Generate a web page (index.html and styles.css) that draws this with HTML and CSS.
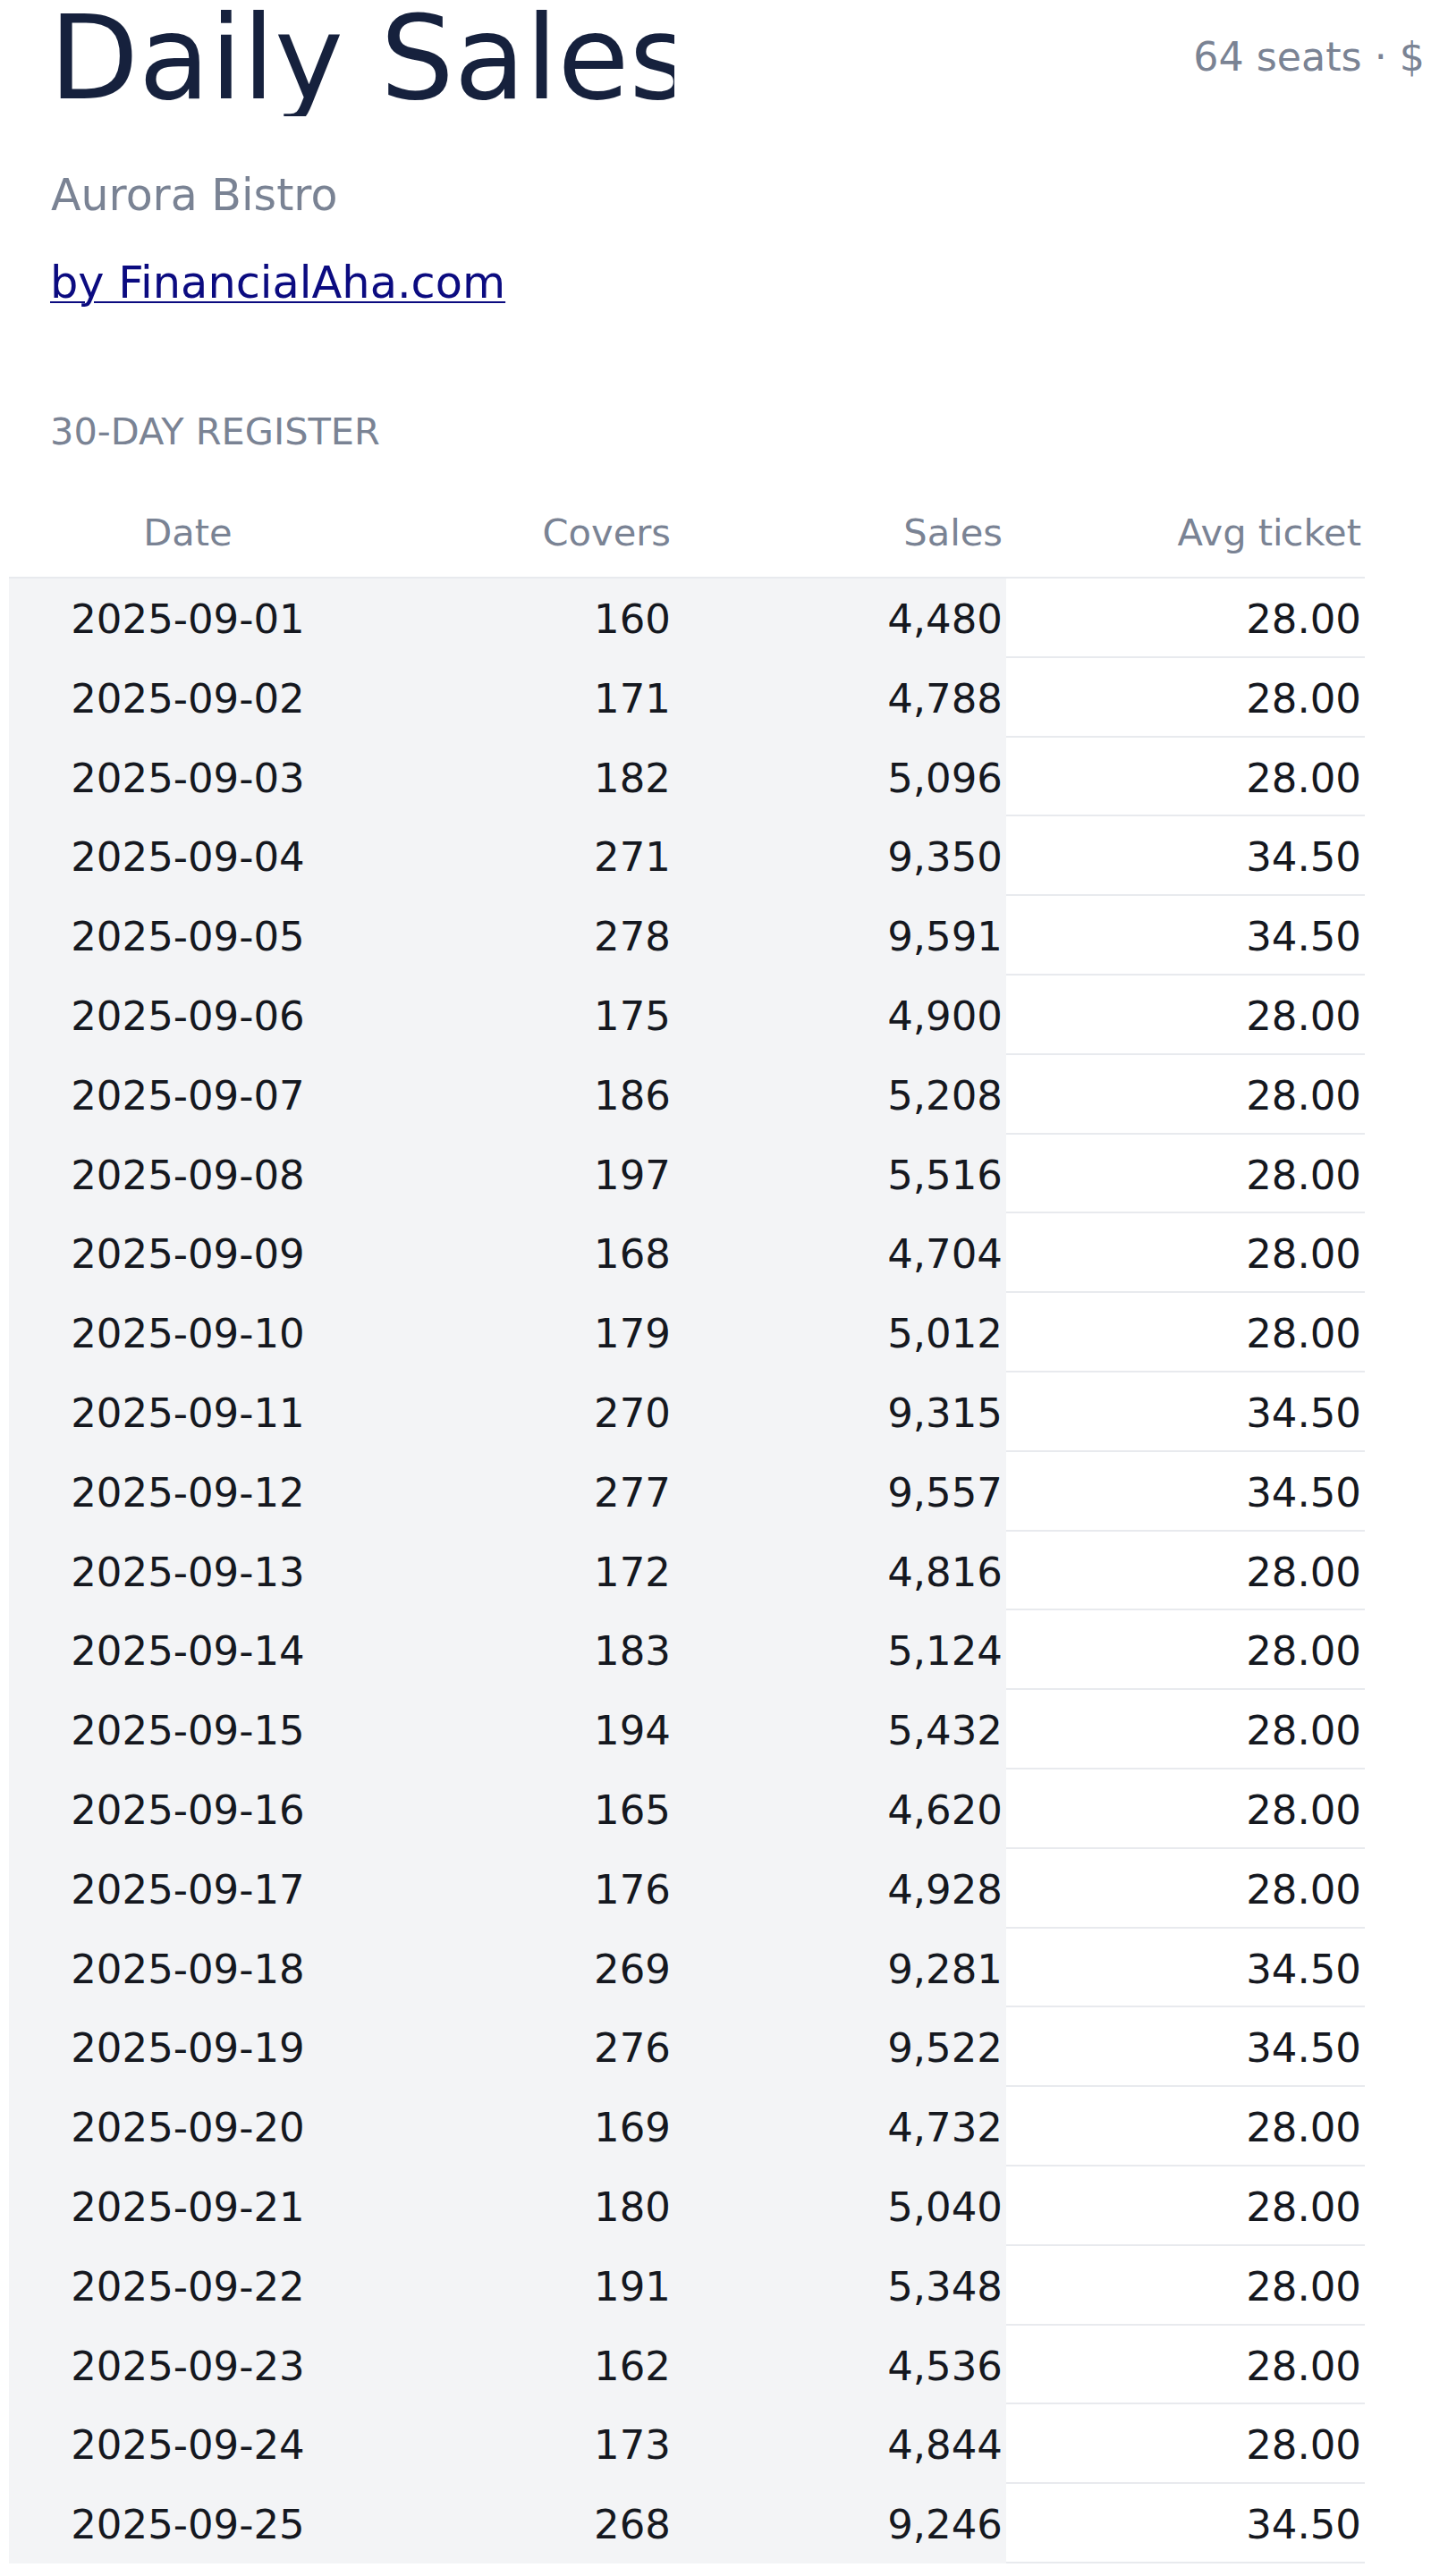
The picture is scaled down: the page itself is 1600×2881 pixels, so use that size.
FILE: index.html
```html
<!DOCTYPE html>
<html lang="en">
<head>
<meta charset="utf-8">
<title>Daily Sales — Aurora Bistro</title>
<link rel="stylesheet" href="styles.css">
</head>
<body>
<div class="page">
  <header class="top">
    <h1 class="title">Daily Sales</h1>
    <div class="meta">64 seats · $</div>
  </header>
  <p class="venue">Aurora Bistro</p>
  <p class="byline"><a class="byline-link" href="#">by FinancialAha.com</a></p>
  <h2 class="section-label">30-DAY REGISTER</h2>
  <table class="register">
    <thead>
      <tr>
        <th class="c-date">Date</th>
        <th class="c-covers">Covers</th>
        <th class="c-sales">Sales</th>
        <th class="c-avg">Avg ticket</th>
      </tr>
    </thead>
    <tbody>
      <tr><td class="c-date">2025-09-01</td><td class="c-covers">160</td><td class="c-sales">4,480</td><td class="c-avg">28.00</td></tr>
      <tr><td class="c-date">2025-09-02</td><td class="c-covers">171</td><td class="c-sales">4,788</td><td class="c-avg">28.00</td></tr>
      <tr><td class="c-date">2025-09-03</td><td class="c-covers">182</td><td class="c-sales">5,096</td><td class="c-avg">28.00</td></tr>
      <tr><td class="c-date">2025-09-04</td><td class="c-covers">271</td><td class="c-sales">9,350</td><td class="c-avg">34.50</td></tr>
      <tr><td class="c-date">2025-09-05</td><td class="c-covers">278</td><td class="c-sales">9,591</td><td class="c-avg">34.50</td></tr>
      <tr><td class="c-date">2025-09-06</td><td class="c-covers">175</td><td class="c-sales">4,900</td><td class="c-avg">28.00</td></tr>
      <tr><td class="c-date">2025-09-07</td><td class="c-covers">186</td><td class="c-sales">5,208</td><td class="c-avg">28.00</td></tr>
      <tr><td class="c-date">2025-09-08</td><td class="c-covers">197</td><td class="c-sales">5,516</td><td class="c-avg">28.00</td></tr>
      <tr><td class="c-date">2025-09-09</td><td class="c-covers">168</td><td class="c-sales">4,704</td><td class="c-avg">28.00</td></tr>
      <tr><td class="c-date">2025-09-10</td><td class="c-covers">179</td><td class="c-sales">5,012</td><td class="c-avg">28.00</td></tr>
      <tr><td class="c-date">2025-09-11</td><td class="c-covers">270</td><td class="c-sales">9,315</td><td class="c-avg">34.50</td></tr>
      <tr><td class="c-date">2025-09-12</td><td class="c-covers">277</td><td class="c-sales">9,557</td><td class="c-avg">34.50</td></tr>
      <tr><td class="c-date">2025-09-13</td><td class="c-covers">172</td><td class="c-sales">4,816</td><td class="c-avg">28.00</td></tr>
      <tr><td class="c-date">2025-09-14</td><td class="c-covers">183</td><td class="c-sales">5,124</td><td class="c-avg">28.00</td></tr>
      <tr><td class="c-date">2025-09-15</td><td class="c-covers">194</td><td class="c-sales">5,432</td><td class="c-avg">28.00</td></tr>
      <tr><td class="c-date">2025-09-16</td><td class="c-covers">165</td><td class="c-sales">4,620</td><td class="c-avg">28.00</td></tr>
      <tr><td class="c-date">2025-09-17</td><td class="c-covers">176</td><td class="c-sales">4,928</td><td class="c-avg">28.00</td></tr>
      <tr><td class="c-date">2025-09-18</td><td class="c-covers">269</td><td class="c-sales">9,281</td><td class="c-avg">34.50</td></tr>
      <tr><td class="c-date">2025-09-19</td><td class="c-covers">276</td><td class="c-sales">9,522</td><td class="c-avg">34.50</td></tr>
      <tr><td class="c-date">2025-09-20</td><td class="c-covers">169</td><td class="c-sales">4,732</td><td class="c-avg">28.00</td></tr>
      <tr><td class="c-date">2025-09-21</td><td class="c-covers">180</td><td class="c-sales">5,040</td><td class="c-avg">28.00</td></tr>
      <tr><td class="c-date">2025-09-22</td><td class="c-covers">191</td><td class="c-sales">5,348</td><td class="c-avg">28.00</td></tr>
      <tr><td class="c-date">2025-09-23</td><td class="c-covers">162</td><td class="c-sales">4,536</td><td class="c-avg">28.00</td></tr>
      <tr><td class="c-date">2025-09-24</td><td class="c-covers">173</td><td class="c-sales">4,844</td><td class="c-avg">28.00</td></tr>
      <tr><td class="c-date">2025-09-25</td><td class="c-covers">268</td><td class="c-sales">9,246</td><td class="c-avg">34.50</td></tr>
    </tbody>
  </table>
</div>
</body>
</html>
```

FILE: styles.css
```css
html, body {
  margin: 0;
  padding: 0;
  background: #ffffff;
}

body {
  font-family: "DejaVu Sans", "Liberation Sans", sans-serif;
  color: #15181f;
  overflow-x: hidden;
}

.page {
  padding: 0 7px 0 10px;
}

.top {
  display: flex;
  justify-content: space-between;
  align-items: flex-start;
  padding-left: 45px;
}

.title {
  margin: 0;
  width: 699px;
  overflow: hidden;
  white-space: nowrap;
  font-size: 130px;
  line-height: 130px;
  font-weight: normal;
  color: #16213d;
}

.meta {
  margin-top: 42px;
  font-size: 44.3px;
  line-height: 44px;
  color: #7a8394;
  white-space: nowrap;
}

.venue {
  margin: 63.5px 0 0 0;
  padding-left: 47px;
  font-size: 49px;
  line-height: 49px;
  color: #7a8394;
}

.byline {
  margin: 49px 0 0 0;
  padding-left: 46px;
  font-size: 49.4px;
  line-height: 49px;
}

.byline-link {
  color: #0b0b80;
  text-decoration: underline;
  text-decoration-thickness: 2px;
  text-underline-offset: 4px;
}

.section-label {
  margin: 121.4px 0 0 0;
  padding-left: 46px;
  font-size: 41.5px;
  line-height: 41.5px;
  font-weight: normal;
  color: #7a8394;
}

.register {
  margin-top: 71.5px;
  border-collapse: separate;
  border-spacing: 0;
  width: 1516px;
  table-layout: fixed;
}

.register th {
  padding: 0 4px 28.6px 4px;
  font-size: 41.6px;
  line-height: 41.5px;
  font-weight: normal;
  color: #7a8394;
  border-bottom: 2px solid #e8eaee;
}

.register td {
  padding: 24px 4px 18px 4px;
  font-size: 45px;
  line-height: 44.8px;
  vertical-align: top;
  color: #15181f;
  background: #f3f4f6;
}

.register td.c-avg {
  background: #ffffff;
  border-bottom: 2px solid #e8eaee;
}

.c-date {
  width: 392px;
  text-align: center;
}

.c-covers {
  width: 336px;
  text-align: right;
}

.c-sales {
  width: 363px;
  text-align: right;
}

.c-avg {
  width: 393px;
  text-align: right;
}
```
